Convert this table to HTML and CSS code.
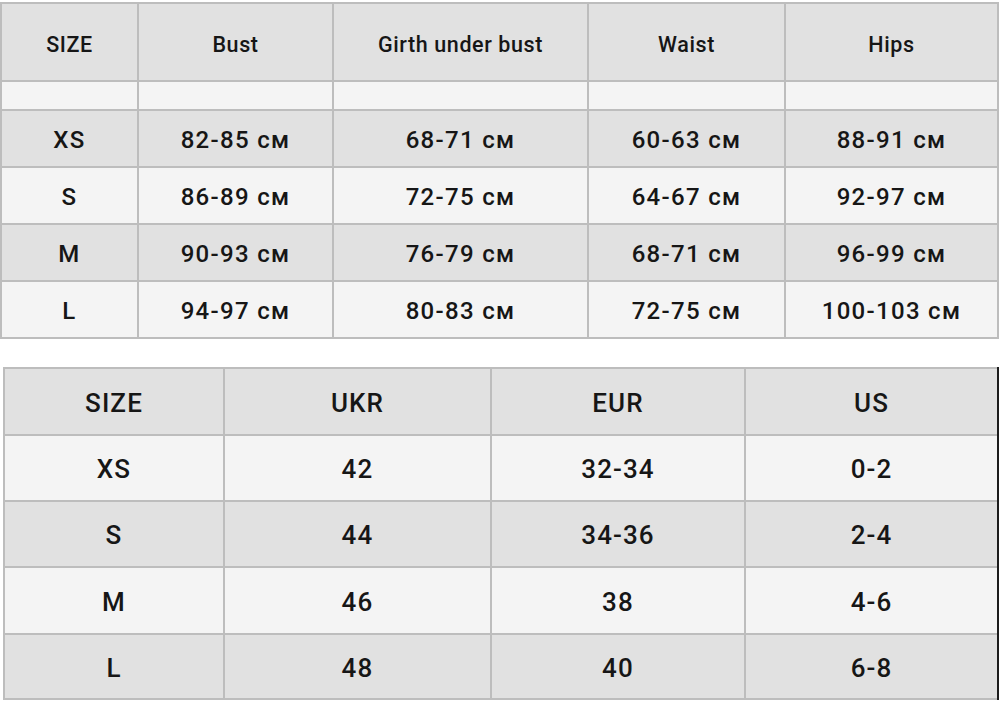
FILE: index.html
```html
<!DOCTYPE html>
<html lang="en">
<head>
<meta charset="utf-8">
<title>Size chart</title>
<link rel="stylesheet" href="styles.css">
</head>
<body>
<div class="chart chart-measure">
  <div class="cell head">SIZE</div>
  <div class="cell head">Bust</div>
  <div class="cell head">Girth under bust</div>
  <div class="cell head">Waist</div>
  <div class="cell head">Hips</div>

  <div class="cell light"></div>
  <div class="cell light"></div>
  <div class="cell light"></div>
  <div class="cell light"></div>
  <div class="cell light"></div>

  <div class="cell gray">XS</div>
  <div class="cell gray">82-85 см</div>
  <div class="cell gray">68-71 см</div>
  <div class="cell gray">60-63 см</div>
  <div class="cell gray">88-91 см</div>

  <div class="cell light">S</div>
  <div class="cell light">86-89 см</div>
  <div class="cell light">72-75 см</div>
  <div class="cell light">64-67 см</div>
  <div class="cell light">92-97 см</div>

  <div class="cell gray">M</div>
  <div class="cell gray">90-93 см</div>
  <div class="cell gray">76-79 см</div>
  <div class="cell gray">68-71 см</div>
  <div class="cell gray">96-99 см</div>

  <div class="cell light">L</div>
  <div class="cell light">94-97 см</div>
  <div class="cell light">80-83 см</div>
  <div class="cell light">72-75 см</div>
  <div class="cell light">100-103 см</div>
</div>

<div class="chart chart-convert">
  <div class="cell head">SIZE</div>
  <div class="cell head">UKR</div>
  <div class="cell head">EUR</div>
  <div class="cell head">US</div>

  <div class="cell light">XS</div>
  <div class="cell light">42</div>
  <div class="cell light">32-34</div>
  <div class="cell light">0-2</div>

  <div class="cell gray">S</div>
  <div class="cell gray">44</div>
  <div class="cell gray">34-36</div>
  <div class="cell gray">2-4</div>

  <div class="cell light">M</div>
  <div class="cell light">46</div>
  <div class="cell light">38</div>
  <div class="cell light">4-6</div>

  <div class="cell gray">L</div>
  <div class="cell gray">48</div>
  <div class="cell gray">40</div>
  <div class="cell gray">6-8</div>
</div>
</body>
</html>
```
FILE: styles.css
```css
html, body {
  margin: 0;
  padding: 0;
  background: #ffffff;
}

body {
  font-family: Roboto, "Liberation Sans", sans-serif;
  font-weight: 500;
  color: #161616;
}

.chart {
  display: grid;
  gap: 2px;
  padding: 2px;
  background: #bdbdbd;
  box-sizing: border-box;
}

.cell {
  display: flex;
  align-items: center;
  justify-content: center;
  white-space: nowrap;
  padding-top: 2px;
  box-sizing: border-box;
}

.head { background: #e1e1e1; }
.gray { background: #e1e1e1; }
.light { background: #f4f4f4; }

.chart-measure {
  width: 999px;
  margin-top: 2px;
  grid-template-columns: 135px 193px 253px 195px 211px;
  grid-template-rows: 76px 27px 55px 55px 55px 55px;
  font-size: 24px;
  letter-spacing: 1.3px;
}

.chart-measure .head {
  font-size: 21.5px;
  letter-spacing: 0.6px;
  padding-top: 4px;
}

.chart-convert {
  width: 996px;
  margin-top: 28px;
  margin-left: 3px;
  border-right: 2px solid #1c1c1c;
  padding-right: 0;
  grid-template-columns: 218px 265px 252px 251px;
  grid-template-rows: 65px 64px 64px 65px 63px;
  font-size: 26px;
  letter-spacing: 1.1px;
}
```
